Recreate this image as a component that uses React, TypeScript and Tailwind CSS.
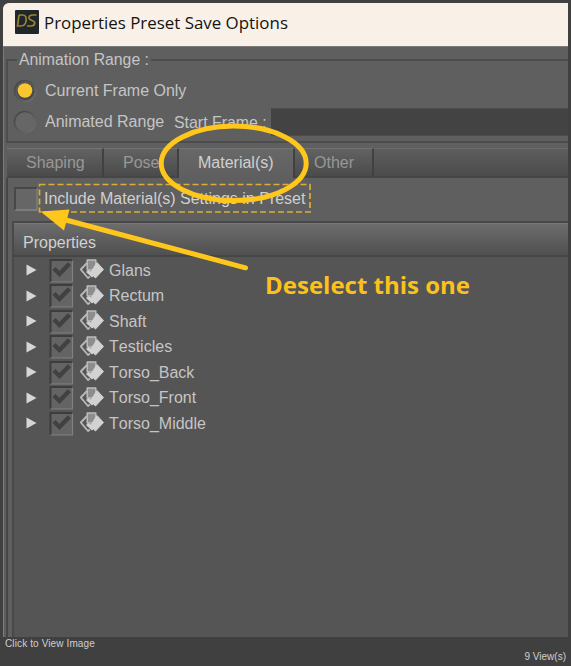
import clsx from 'clsx'

const surfaces = ['Glans', 'Rectum', 'Shaft', 'Testicles', 'Torso_Back', 'Torso_Front', 'Torso_Middle']

const tabs = [
  { label: 'Shaping', width: 'w-[97px]', pad: 'pl-[19px]' },
  { label: 'Pose', width: 'w-[75px]', pad: 'pl-[19px]' },
  { label: 'Material(s)', width: 'w-[116px]', pad: 'pl-[19px]' },
  { label: 'Other', width: 'w-[79px]', pad: 'pl-[19px]' },
]

function TitleBar() {
  return (
    <div className="flex h-[43px] shrink-0 items-center bg-[#f9f1e8] pl-[12px]">
      <svg width="24" height="24" viewBox="0 0 24 24" className="-mt-[5px] shrink-0">
        <rect width="24" height="24" rx="1" fill="#20272b" />
        <g fill="none" stroke="#9c8430" strokeWidth="1.7">
          <path d="M4 5h3.500c2.800 0 4 1.900 3.600 5.500-.4 3.600-2.300 5.500-5.100 5.500H2.500L4 5" />
          <path d="M21.500 5h-4.200c-2 0-3.300 1-3.300 2.800 0 3.300 6 2.200 5.700 5.400-.2 1.800-1.600 2.800-3.500 2.800H12" />
        </g>
      </svg>
      <span className="-mt-[4px] ml-[5px] whitespace-nowrap font-['Open_Sans',sans-serif] text-[16.900px] text-[#141414]">
        Properties Preset Save Options
      </span>
    </div>
  )
}

function Radio({ checked }: { checked?: boolean }) {
  return (
    <svg width="24" height="24" viewBox="0 0 24 24" className="shrink-0">
      <defs>
        <linearGradient id="well" x1="0" y1="0" x2="1" y2="1">
          <stop offset="0" stopColor="#424242" />
          <stop offset="0.5" stopColor="#565656" />
          <stop offset="1" stopColor="#747474" />
        </linearGradient>
      </defs>
      <circle cx="12" cy="12" r="10.500" fill={checked ? '#585858' : '#666'} stroke="url(#well)" strokeWidth="1.500" />
      {checked && <circle cx="12.500" cy="12.500" r="8.500" fill="#494949" />}
      {checked && <circle cx="12" cy="11.500" r="7.300" fill="#fac62f" />}
    </svg>
  )
}

function AnimationRange() {
  return (
    <fieldset className="ml-[2px] mt-[3px] h-[93px] min-w-0 border-y-2 border-l-2 border-[#4d4d4d] text-[#c5c5c5]">
      <legend className="ml-[9px] h-[20px] px-[2px] text-[15.800px] leading-[20px]">Animation Range :</legend>
      <div className="-mt-px flex h-[24px] items-center pl-[5px] pt-[20px]">
        <Radio checked />
        <span className="ml-[8px]">Current Frame Only</span>
      </div>
      <div className="mt-[15px] flex h-[28px] items-center pl-[5px]">
        <Radio />
        <span className="ml-[8px] w-[129px] whitespace-nowrap">Animated Range</span>
        <span className="mt-[2px] w-[97px] whitespace-nowrap text-[15.900px]">Start Frame :</span>
        <div className="h-[28px] flex-1 border-y border-[#4d4d4d] bg-[#434343]" />
      </div>
    </fieldset>
  )
}

function Tabs() {
  return (
    <div className="ml-px mt-[5px] flex h-[30px] shrink-0">
      {tabs.map((tab) => (
        <div
          key={tab.label}
          className={clsx(
            'flex items-center border-r-2 border-t border-r-[#414141] border-t-[#737373]',
            tab.width,
            tab.pad,
            tab.label === 'Material(s)'
              ? 'bg-linear-to-b from-[#686868] to-[#5f5f5f] text-[#d0d0d0]'
              : 'border-b-2 border-b-[#464646] bg-linear-to-b from-[#626262] to-[#4b4b4b] text-[#989898]',
          )}
        >
          <span className={tab.label === 'Material(s)' ? '-mt-[2px]' : ''}>{tab.label}</span>
        </div>
      ))}
      <div className="flex-1 border-b-2 border-t border-b-[#464646] border-t-[#6b6b6b] bg-linear-to-b from-[#5e5e5e] to-[#4b4b4b]" />
    </div>
  )
}

function SurfaceRow({ name }: { name: string }) {
  return (
    <div className="flex h-[25.500px] items-center pl-[12px]">
      <svg width="11" height="14" viewBox="0 0 11 14" className="-mt-px">
        <path d="M.5 1.500 10.500 7 .5 12.500z" fill="#d6d6d6" />
      </svg>
      <svg width="25" height="25" viewBox="0 0 25 25" className="-mt-px ml-[12px]">
        <rect x="1" y="1.500" width="22.500" height="22.500" fill="#646464" />
        <path d="M1.500 24V2H23" fill="none" stroke="#3d3d3d" strokeWidth="2" />
        <path d="M1.500 24h22V3" fill="none" stroke="#818181" strokeWidth="1.200" />
        <path d="m3.500 12 3-3 3.800 4 8.500-8.800 3.200 3L10.500 19z" fill="#414141" />
      </svg>
      <svg width="26" height="22" viewBox="0 0 26 22" className="-mt-[3px] ml-[5px]">
        <path d="M8 5 1.800 11.500 9 20l2-1.500" fill="none" stroke="#b8b8b8" strokeWidth="1.900" strokeLinejoin="round" />
        <path d="M8.200 2h8.600v10H8.200z" fill="#8d8d8d" stroke="#bcbcbc" strokeWidth="1.500" strokeLinejoin="round" />
        <path
          d="m18 4.500 6.500 7-8 8.500-2.200-2-1.300 1-5.500-5 2-1.500 2.500 1.500z"
          fill="#d2d2d2"
          stroke="#d2d2d2"
          strokeLinejoin="round"
        />
      </svg>
      <span className="ml-[4px]">{name}</span>
    </div>
  )
}

function PropertiesList() {
  return (
    <div className="ml-[4px] mt-[9px] flex flex-1 flex-col border-l-2 border-t-2 border-[#494949] bg-[#555]">
      <div className="mb-px flex h-[34px] shrink-0 items-center border-b-2 border-t border-b-[#454545] border-t-[#777] bg-linear-to-b from-[#6c6c6c] to-[#505050] pl-[9px] pt-[7px] text-[#d0d0d0]">
        Properties
      </div>
      {surfaces.map((name) => (
        <SurfaceRow key={name} name={name} />
      ))}
    </div>
  )
}

function Annotation() {
  return (
    <>
      <svg className="absolute left-0 top-0" width="571" height="666" viewBox="0 0 571 666">
        <rect x="39.500" y="184.500" width="270.500" height="27.500" fill="none" stroke="#dcae38" strokeWidth="1.700" strokeDasharray="6 3" />
        <ellipse cx="233.700" cy="163.300" rx="72.500" ry="37.300" fill="none" stroke="#ffc71c" strokeWidth="5" />
        <path d="M66 220 245.500 267.800" stroke="#ffc71c" strokeWidth="5" strokeLinecap="round" />
        <path d="M40.500 211.500 69.500 209.500 64 230.500z" fill="#ffc71c" />
      </svg>
      <span className="absolute left-[265px] top-[270px] whitespace-nowrap font-['Open_Sans',sans-serif] text-[24px] font-bold leading-[30px] text-[#fbc11c]">
        Deselect this one
      </span>
    </>
  )
}

export default function App() {
  return (
    <div className="relative flex h-[666px] w-[571px] flex-col overflow-hidden bg-[#404040] pt-[3px] font-['Liberation_Sans',Arial,sans-serif]">
      <div className="ml-[3px] flex h-[634px] w-[565px] flex-col overflow-hidden rounded-tl-[6px] bg-[#5f5f5f] text-[16px] leading-[20px] text-[#c5c5c5] [font-kerning:none]">
        <TitleBar />
        <div className="flex min-h-0 flex-1 flex-col border-l border-t border-[#7b7b7b]">
          <AnimationRange />
          <div className="ml-[2px] flex min-h-0 flex-1 flex-col">
            <Tabs />
            <div className="flex min-h-0 flex-1 flex-col border-l-2 border-[#454545] pt-[8px]">
              <div className="flex h-[26px] shrink-0 items-center pl-[6px]">
                <div className="h-[24px] w-[24px] border-2 border-b-[#7c7c7c] border-l-[#484848] border-r-[#777] border-t-[#484848] bg-[#666]" />
                <span className="ml-[6px] whitespace-nowrap text-[#d0d0d0]">Include Material(s) Settings in Preset</span>
              </div>
              <PropertiesList />
            </div>
          </div>
        </div>
      </div>
      <div className="flex h-[29px] flex-col text-[10px] leading-[12px] text-[#cfcfcf]">
        <span className="ml-[5px] mt-px tracking-[0.120px]">Click to View Image</span>
        <span className="mr-[5px] mt-px self-end">9 View(s)</span>
      </div>
      <Annotation />
    </div>
  )
}
